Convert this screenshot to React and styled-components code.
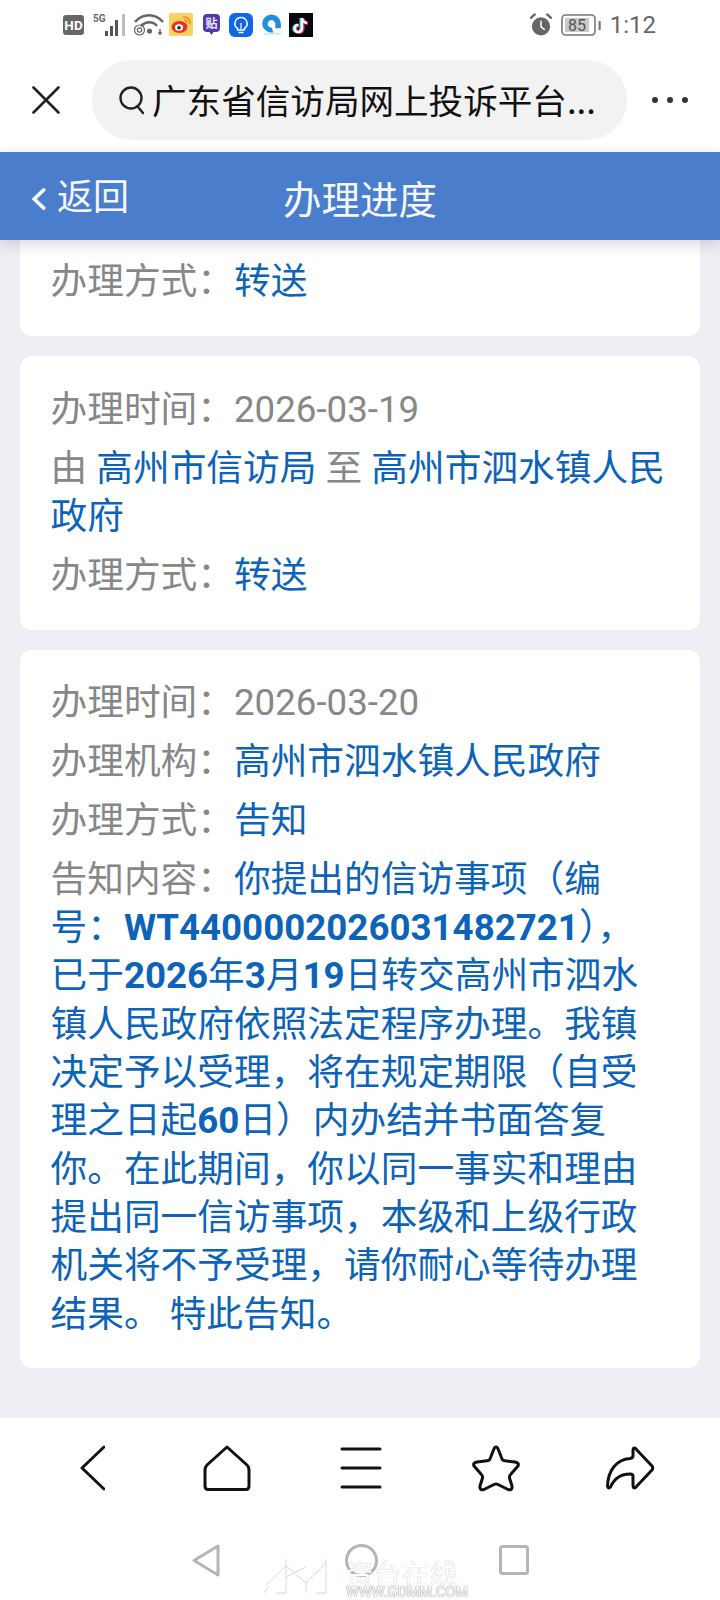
import React from 'react';
import styled, { createGlobalStyle } from 'styled-components';

const GlobalStyle = createGlobalStyle`
  html, body {
    margin: 0;
    padding: 0;
    background: #fff;
  }
  body {
    font-family: Roboto, "Noto Sans CJK SC", "Noto Sans", sans-serif;
  }
`;

const Screen = styled.div`
  position: relative;
  width: 720px;
  height: 1600px;
  display: flex;
  flex-direction: column;
  overflow: hidden;
  background: #fff;
`;

const StatusBar = styled.div`
  height: 50px;
  flex: none;
  display: flex;
  align-items: center;
  justify-content: space-between;
  padding: 0 64px 1px 63px;
  box-sizing: border-box;
`;

const StatusGroup = styled.div`
  display: flex;
  align-items: center;
  gap: ${(p) => p.$gap || 0}px;
`;

const StatusSlot = styled.div`
  display: flex;
  margin-right: ${(p) => p.$gap}px;
`;

const Clock = styled.span`
  font-size: 24px;
  color: #666;
`;

const TopBar = styled.div`
  height: 102px;
  flex: none;
  display: flex;
  align-items: center;
  padding: 0 31px 2px 32px;
  box-sizing: border-box;
`;

const AddressPill = styled.div`
  width: 535px;
  height: 80px;
  margin: 0 24px 0 32px;
  padding-left: 26px;
  box-sizing: border-box;
  display: flex;
  align-items: center;
  gap: 6px;
  border-radius: 40px;
  background: #f2f2f2;
`;

const AddressText = styled.span`
  font-size: 34.6px;
  line-height: 1;
  margin-top: -2px;
  color: #111;
  white-space: nowrap;
  font-family: "Noto Sans CJK SC", sans-serif;
`;

const PageHeader = styled.header`
  position: relative;
  z-index: 1;
  height: 88px;
  flex: none;
  display: grid;
  grid-template-columns: 1fr auto 1fr;
  align-items: center;
  padding: 0 31px;
  background: #4a7dcb;
  box-shadow: 0 4px 14px rgba(0, 0, 0, 0.16);
  color: #fff;
`;

const BackLink = styled.div`
  display: flex;
  align-items: center;
  gap: 11px;
  font-size: 36px;
  margin-top: -4px;
  color: #f4f7fc;
  font-family: "Noto Sans CJK SC", sans-serif;
`;

const BackChevron = styled.svg`
  margin-top: 9px;
`;

const PageTitle = styled.h1`
  margin: 2px 0 0;
  font-size: 38.5px;
  font-weight: 400;
  color: #f4f7fc;
  font-family: "Noto Sans CJK SC", sans-serif;
`;

const Timeline = styled.main`
  flex: 1;
  min-height: 0;
  display: flex;
  flex-direction: column;
  gap: 20px;
  padding: 0 20px;
  background: #eeeef4;
  overflow: hidden;
`;

const Card = styled.section`
  flex: none;
  padding: ${(p) => (p.$clipped ? '17.5px 32px 30.5px 30.5px' : '29.5px 32px 29.5px 30.5px')};
  background: #fff;
  border-radius: ${(p) => (p.$clipped ? '0 0 12px 12px' : '12px')};
  display: flex;
  flex-direction: column;
  gap: 10.6px;
`;

const Row = styled.div`
  font-size: 36.7px;
  line-height: 48.3px;
  color: #878787;
  font-family: Roboto, "Noto Sans CJK SC", sans-serif;
`;

const Link = styled.span`
  color: #0c63b8;
`;

const Bold = styled.b`
  font-weight: 700;
`;

const BottomBar = styled.nav`
  height: 102px;
  flex: none;
  border-top: 1px solid #f6f6f6;
`;

const BottomIcons = styled.div`
  height: 100px;
  padding-left: 25px;
  display: grid;
  grid-template-columns: repeat(5, 134.5px);
  justify-items: center;
  align-items: center;
`;

const SystemNav = styled.div`
  flex: none;
  height: 80px;
  display: flex;
  align-items: center;
  padding-left: 192px;
  box-sizing: border-box;
`;

const SystemSlot = styled.div`
  display: flex;
  margin-right: ${(p) => p.$gap}px;
`;

const Watermark = styled.div`
  position: absolute;
  left: 262px;
  top: 1557px;
  display: flex;
  gap: 16px;
  color: #fff;
`;

const WatermarkText = styled.div`
  display: flex;
  flex-direction: column;
  width: 116px;
  margin-top: 3px;
  text-shadow: 0 0 1px #a8a8a8;
`;

const WatermarkTitle = styled.span`
  font-size: 27px;
  line-height: 26px;
  letter-spacing: 1px;
  white-space: nowrap;
  font-family: "Noto Sans CJK SC", sans-serif;
`;

const WatermarkUrl = styled.span`
  font-size: 14.5px;
  line-height: 13px;
  white-space: nowrap;
  text-shadow: 0 0 1px #8a8a8a, 0 0 1px #8a8a8a;
`;

const HdIcon = () => (
  <svg width="21" height="20" viewBox="0 0 21 20">
    <rect width="21" height="20" rx="3" fill="#666" />
    <text x="10.5" y="15" textAnchor="middle" fontSize="13.5" fontWeight="700" fill="#fff" fontFamily="Roboto">HD</text>
  </svg>
);

const SignalIcon = () => (
  <svg width="33" height="24" viewBox="0 0 33 24">
    <text x="0" y="9" fontSize="10" fontWeight="700" fill="#666" fontFamily="Roboto">5G</text>
    <rect x="12" y="18" width="3" height="5" fill="#555" />
    <rect x="17" y="13" width="3" height="10" fill="#555" />
    <rect x="22" y="7" width="3" height="16" fill="#555" />
    <rect x="29" y="1" width="3" height="22" fill="#bbb" />
  </svg>
);

const WifiIcon = () => (
  <svg width="32" height="23" viewBox="0 0 32 23" fill="none" stroke="#666">
    <path d="M2 9 C10 0 22 0 30 9" strokeWidth="2.6" />
    <path d="M8 13 C13 8 20 8 24 13" strokeWidth="2.6" />
    <circle cx="6.5" cy="17" r="5" strokeWidth="1.2" />
    <circle cx="6.5" cy="17" r="2.2" strokeWidth="1.2" />
    <circle cx="16.5" cy="18" r="2.6" fill="#666" stroke="none" />
    <path d="M27 16 v6 M25 20 h4" strokeWidth="1.4" />
  </svg>
);

const WeiboIcon = () => (
  <svg width="24" height="23" viewBox="0 0 24 23">
    <rect width="24" height="23" rx="2" fill="#fbd25c" />
    <ellipse cx="10.5" cy="14" rx="8" ry="6" fill="#e5342a" />
    <ellipse cx="10" cy="14.5" rx="4" ry="3.2" fill="#fff" />
    <circle cx="10" cy="14.8" r="1.8" fill="#222" />
    <path d="M14 4 C19 3.5 22 7 20.5 11 M15 7 C17 7 18.5 8.5 18 10.5" fill="none" stroke="#f08a24" strokeWidth="1.5" />
  </svg>
);

const TiebaIcon = () => (
  <svg width="17" height="22" viewBox="0 0 17 22">
    <path d="M4 0 H13 Q17 0 17 4 V14 Q17 18 13 18 H10.5 L8.5 21 L6.5 18 H4 Q0 18 0 14 V4 Q0 0 4 0 Z" fill="#4b3da8" />
    <text x="8.5" y="14" textAnchor="middle" fontSize="12" fontWeight="700" fill="#f5e6f8" fontFamily="Noto Sans CJK SC">贴</text>
  </svg>
);

const BulbIcon = () => (
  <svg width="24" height="24" viewBox="0 0 24 24">
    <rect width="24" height="24" rx="6" fill="#0f66e6" />
    <path d="M12 4.5 a6 6 0 0 1 3.4 11 v1.5 h-6.8 v-1.5 a6 6 0 0 1 3.4 -11 Z M9.5 19.5 h5" fill="none" stroke="#fff" strokeWidth="1.5" />
    <path d="M12 10 v6" stroke="#fff" strokeWidth="1.2" />
  </svg>
);

const CloudIcon = () => (
  <svg width="19" height="22" viewBox="2 4 17 20">
    <path d="M2 13 a8.5 8.5 0 0 1 17 0 v4 h-5 v-4 a3.5 3.5 0 1 0 -3 3.5 L12 21 A9 9 0 0 1 2 13 Z" fill="#1e8fe0" />
    <path d="M4 21 h15 v2 h-15 Z" fill="#d5e8f4" />
  </svg>
);

const TiktokIcon = () => (
  <svg width="24" height="24" viewBox="0 0 24 24" fill="none" strokeWidth="3">
    <rect width="24" height="24" fill="#0a0510" />
    <path d="M13 5 v10.5 a3.6 3.6 0 1 1 -3.6 -3.6" stroke="#25f0ea" transform="translate(-1 0)" />
    <path d="M13 5 v10.5 a3.6 3.6 0 1 1 -3.6 -3.6 M13 5 c0.5 3 2.5 4.5 5 5" stroke="#f0285a" transform="translate(1 0.5)" />
    <path d="M13 5 v10.5 a3.6 3.6 0 1 1 -3.6 -3.6 M13 5 c0.5 3 2.5 4.5 5 5" stroke="#fff" strokeWidth="2.4" />
  </svg>
);

const AlarmIcon = () => (
  <svg width="22" height="23" viewBox="0 0 23 24">
    <circle cx="11.5" cy="14" r="9.5" fill="#666" />
    <path d="M11.5 8 v6.5 l4 3" fill="none" stroke="#fff" strokeWidth="1.6" />
    <path d="M1 5 L5 1.5 M22 5 L18 1.5" stroke="#666" strokeWidth="2.4" strokeLinecap="round" />
  </svg>
);

const BatteryIcon = () => (
  <svg width="40" height="22" viewBox="0 0 40 22">
    <rect x="1" y="1" width="33" height="20" rx="3.5" fill="#fff" stroke="#777" strokeWidth="1.6" />
    <rect x="4" y="4" width="24" height="14" fill="#c9c9c9" />
    <text x="16" y="17" textAnchor="middle" fontSize="16" fill="#555" fontFamily="Roboto">85</text>
    <rect x="37.5" y="7" width="2.2" height="9" fill="#777" />
  </svg>
);

const CloseIcon = () => (
  <svg width="28" height="28" viewBox="0 0 28 28" stroke="#222" strokeWidth="2.6" strokeLinecap="round">
    <path d="M1.5 1.5 L26.5 26.5 M26.5 1.5 L1.5 26.5" />
  </svg>
);

const SearchIcon = () => (
  <svg width="28" height="30" viewBox="0 0 28 30" fill="none" stroke="#222" strokeWidth="2.4" strokeLinecap="round">
    <circle cx="13" cy="13" r="10.5" />
    <path d="M20 22 L25 28" />
  </svg>
);

const MoreIcon = () => (
  <svg width="38" height="8" viewBox="0 0 38 8" fill="#333">
    <circle cx="4" cy="4" r="3" />
    <circle cx="19" cy="4" r="3" />
    <circle cx="34" cy="4" r="3" />
  </svg>
);

const NavBack = () => (
  <svg width="25" height="46" viewBox="0 0 25 46" fill="none" stroke="#111" strokeWidth="3" strokeLinecap="round" strokeLinejoin="round">
    <path d="M24 2 L2 23 L24 44" />
  </svg>
);

const NavHome = () => (
  <svg width="48" height="46" viewBox="0 0 48 46" fill="none" stroke="#111" strokeWidth="3" strokeLinejoin="round">
    <path d="M24 2 L44 20 Q46 22 46 25 V41 Q46 44.5 43 44.5 H5 Q2 44.5 2 41 V25 Q2 22 4 20 Z" />
  </svg>
);

const NavMenu = () => (
  <svg width="42" height="42" viewBox="0 0 42 42" stroke="#111" strokeWidth="3" strokeLinecap="round">
    <path d="M2 2 H40 M2 21 H40 M2 40 H40" />
  </svg>
);

const NavStar = () => (
  <svg width="50" height="47" viewBox="0 0 50 47" fill="none" stroke="#111" strokeWidth="3" strokeLinejoin="round">
    <path d="M25 2 Q26.5 2 27.5 5 L31 14 Q31.5 15.5 34 15.8 L44 17 Q48.5 18 47 21 L40 29 Q38 31 38.5 33 L41 41 Q41.5 46 37 44.5 L27 39.5 Q25 38.5 23 39.5 L13 44.5 Q8.5 46 9 41 L11.5 33 Q12 31 10 29 L3 21 Q1.5 18 6 17 L16 15.8 Q18.5 15.5 19 14 L22.5 5 Q23.5 2 25 2 Z" />
  </svg>
);

const NavShare = () => (
  <svg width="50" height="44" viewBox="0 0 50 44" fill="none" stroke="#111" strokeWidth="3" strokeLinejoin="round">
    <path d="M28 4 Q28.5 1 30.5 2.5 L47 20 Q48.5 22 47 24 L30.5 41.5 Q28 43 28 39 V30 Q28 28 25 28 C15 28 9 33 5.5 41 Q3 43.5 2.5 40 C3 25 11 13.5 25 12.5 Q28 12 28 10 Z" />
  </svg>
);

const SysBack = () => (
  <svg width="28" height="33" viewBox="0 0 28 33" fill="none" stroke="#b5b5b5" strokeWidth="3" strokeLinejoin="round">
    <path d="M26 2 V31 L2 16.5 Z" />
  </svg>
);

const SysHome = () => (
  <svg width="33" height="33" viewBox="0 0 33 33" fill="none" stroke="#b5b5b5" strokeWidth="3">
    <circle cx="16.5" cy="16.5" r="15" />
  </svg>
);

const SysRecent = () => (
  <svg width="30" height="30" viewBox="0 0 30 30" fill="none" stroke="#b5b5b5" strokeWidth="3" strokeLinejoin="round">
    <rect x="1.5" y="1.5" width="27" height="27" rx="2" />
  </svg>
);

const WatermarkLogo = () => (
  <svg width="68" height="38" viewBox="0 0 68 38" fill="none" stroke="#d8d8d8" strokeWidth="1">
    <path d="M4 28 L24 9 M24 2 V36 H14 M24 9 L44 26 L64 6 M44 26 V36 M64 2 V36 H54 M24 20 L44 10 M2 36 L6 30" />
  </svg>
);

const App = () => (
  <Screen>
    <GlobalStyle />
    <StatusBar>
      <StatusGroup>
        <StatusSlot $gap={9}><HdIcon /></StatusSlot>
        <StatusSlot $gap={7}><SignalIcon /></StatusSlot>
        <StatusSlot $gap={4}><WifiIcon /></StatusSlot>
        <StatusSlot $gap={10}><WeiboIcon /></StatusSlot>
        <StatusSlot $gap={9}><TiebaIcon /></StatusSlot>
        <StatusSlot $gap={9}><BulbIcon /></StatusSlot>
        <StatusSlot $gap={8}><CloudIcon /></StatusSlot>
        <TiktokIcon />
      </StatusGroup>
      <StatusGroup $gap={9}>
        <AlarmIcon />
        <BatteryIcon />
        <Clock>1:12</Clock>
      </StatusGroup>
    </StatusBar>

    <TopBar>
      <CloseIcon />
      <AddressPill>
        <SearchIcon />
        <AddressText>广东省信访局网上投诉平台...</AddressText>
      </AddressPill>
      <MoreIcon />
    </TopBar>

    <PageHeader>
      <BackLink>
        <BackChevron width="15" height="22" viewBox="0 0 15 23" fill="none" stroke="#f4f7fc" strokeWidth="3.8" strokeLinecap="round">
          <path d="M13 2 L3 11.5 L13 21" />
        </BackChevron>
        返回
      </BackLink>
      <PageTitle>办理进度</PageTitle>
      <span />
    </PageHeader>

    <Timeline>
      <Card $clipped>
        <Row>办理方式：<Link>转送</Link></Row>
      </Card>
      <Card>
        <Row>办理时间：2026-03-19</Row>
        <Row>由 <Link>高州市信访局</Link> 至 <Link>高州市泗水镇人民政府</Link></Row>
        <Row>办理方式：<Link>转送</Link></Row>
      </Card>
      <Card>
        <Row>办理时间：2026-03-20</Row>
        <Row>办理机构：<Link>高州市泗水镇人民政府</Link></Row>
        <Row>办理方式：<Link>告知</Link></Row>
        <Row>
          告知内容：
          <Link>
            你提出的信访事项（编号：<Bold>WT4400002026031482721</Bold>），已于<Bold>2026</Bold>年<Bold>3</Bold>月<Bold>19</Bold>日转交高州市泗水镇人民政府依照法定程序办理。我镇决定予以受理，将在规定期限（自受理之日起<Bold>60</Bold>日）内办结并书面答复你。在此期间，你以同一事实和理由提出同一信访事项，本级和上级行政机关将不予受理，请你耐心等待办理结果。 特此告知。
          </Link>
        </Row>
      </Card>
    </Timeline>

    <BottomBar>
      <BottomIcons>
        <NavBack />
        <NavHome />
        <NavMenu />
        <NavStar />
        <NavShare />
      </BottomIcons>
    </BottomBar>
    <SystemNav>
      <SystemSlot $gap={125}><SysBack /></SystemSlot>
      <SystemSlot $gap={121}><SysHome /></SystemSlot>
      <SystemSlot $gap={0}><SysRecent /></SystemSlot>
    </SystemNav>

    <Watermark>
      <WatermarkLogo />
      <WatermarkText>
        <WatermarkTitle>资台在线</WatermarkTitle>
        <WatermarkUrl>WWW.GDMM.COM</WatermarkUrl>
      </WatermarkText>
    </Watermark>
  </Screen>
);

export default App;
